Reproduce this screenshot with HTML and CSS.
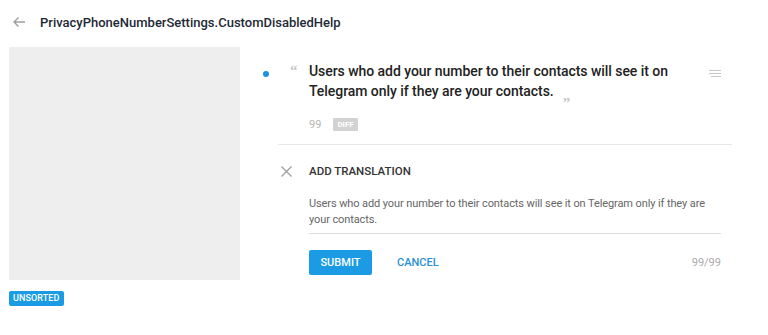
FILE: index.html
```html
<!DOCTYPE html>
<html>
<head>
  <meta charset="UTF-8" />
  <title>PrivacyPhoneNumberSettings.CustomDisabledHelp</title>
  <link rel="stylesheet" href="styles.css">
</head>
<body>
  <div class="header">
    <svg class="back" width="14" height="12" viewBox="0 0 14 12">
      <path d="M13 6H2M6.5 1.5L2 6l4.5 4.5" fill="none" stroke="#9e9e9e" stroke-width="1.4"/>
    </svg>
    <div class="title">PrivacyPhoneNumberSettings.CustomDisabledHelp</div>
  </div>

  <div class="main">
    <div class="side">
      <div class="screenshot"></div>
      <span class="tag">UNSORTED</span>
    </div>

    <div class="content">
      <div class="source">
        <span class="dot"></span>
        <span class="quote open">&ldquo;</span>
        <div class="source-body">
          <div class="source-text">Users who add your number to their contacts will see it on Telegram only if they are your contacts.<span class="quote close">&rdquo;</span></div>
          <div class="meta">
            <span class="count">99</span>
            <span class="diff">DIFF</span>
          </div>
        </div>
        <svg class="menu" width="12" height="8" viewBox="0 0 12 8">
          <path d="M0 0.5h12M0 3.5h12M2 6.5h10" stroke="#c8c8c8" stroke-width="1"/>
        </svg>
      </div>

      <div class="translation">
        <div class="tr-head">
          <svg class="close-icon" width="11" height="11" viewBox="0 0 11 11">
            <path d="M0.5 0.5l10 10M10.5 0.5l-10 10" stroke="#9e9e9e" stroke-width="1.3"/>
          </svg>
          <span class="tr-title">ADD TRANSLATION</span>
        </div>
        <div class="tr-input">Users who add your number to their contacts will see it on Telegram only if they are your contacts.</div>
        <div class="actions">
          <button class="btn btn-submit">SUBMIT</button>
          <button class="btn btn-cancel">CANCEL</button>
          <span class="limit">99/99</span>
        </div>
      </div>
    </div>
  </div>
</body>
</html>
```

FILE: styles.css
```css
body {
  margin: 0;
  font-family: Roboto, "Liberation Sans", Arial, sans-serif;
  background-color: #fff;
  color: #222;
}
.header {
  display: flex;
  align-items: center;
  height: 44px;
  padding-left: 12px;
}
.back {
  margin-right: 14px;
}
.title {
  font-size: 13px;
  font-weight: 500;
  color: #1e2935;
}
.main {
  display: flex;
  padding-top: 3px;
}
.side {
  width: 231px;
  padding-left: 9px;
}
.screenshot {
  height: 233px;
  background-color: #eeeeee;
}
.tag {
  display: inline-block;
  margin-top: 11px;
  padding: 0 4px;
  height: 15px;
  line-height: 15px;
  background-color: #1a9be4;
  color: #fff;
  border-radius: 2px;
  font-size: 9px;
  font-weight: 500;
  letter-spacing: 0.1px;
}
.content {
  width: 469px;
  padding-left: 23px;
}
.source {
  display: flex;
  align-items: flex-start;
  padding-top: 14px;
  height: 83px;
  border-bottom: 1px solid #e8e8e8;
  margin-left: 15px;
}
.dot {
  width: 6px;
  height: 6px;
  border-radius: 50%;
  background-color: #1a92e0;
  margin-top: 10px;
  margin-left: -15px;
}
.quote {
  color: #c4c4c4;
  font-family: Georgia, "Liberation Serif", serif;
  font-weight: 700;
  font-size: 15px;
  line-height: 1;
  letter-spacing: 0;
}
.quote.open {
  margin-left: 21px;
  margin-top: 2px;
  width: 19px;
}
.quote.close {
  display: inline-block;
  margin-left: 9px;
  height: 8px;
  vertical-align: -12px;
}
.source-body {
  width: 370px;
}
.source-text {
  width: 368px;
  font-size: 14px;
  letter-spacing: -0.05px;
  font-weight: 500;
  line-height: 20px;
  color: #222;
}
.meta {
  display: flex;
  align-items: center;
  margin-top: 14px;
}
.count {
  font-size: 11px;
  color: #b5b5b5;
  margin-right: 12px;
}
.diff {
  background-color: #d2d2d2;
  color: #fff;
  font-size: 8px;
  font-weight: 700;
  padding: 0 4px;
  height: 13px;
  line-height: 13px;
  border-radius: 1px;
}
.menu {
  margin-left: 30px;
  margin-top: 9px;
}
.translation {
  padding-top: 19px;
}
.tr-head {
  display: flex;
  align-items: center;
  margin-left: 18px;
}
.close-icon {
  margin-right: 17px;
}
.tr-title {
  font-size: 11.5px;
  font-weight: 500;
  color: #333;
}
.tr-input {
  margin: 18px 0 0 46px;
  width: 412px;
  font-size: 11px;
  letter-spacing: -0.1px;
  line-height: 16px;
  color: #666;
  padding-bottom: 5px;
  border-bottom: 1px solid #dcdcdc;
}
.actions {
  display: flex;
  align-items: center;
  margin: 16px 0 0 46px;
  width: 412px;
}
.btn {
  font-family: Roboto, "Liberation Sans", Arial, sans-serif;
  font-size: 11px;
  font-weight: 500;
  border: none;
  border-radius: 2px;
  cursor: pointer;
}
.btn-submit {
  background-color: #1a9be4;
  color: #fff;
  width: 63px;
  height: 25px;
}
.btn-cancel {
  background: none;
  color: #2a8fd8;
  margin-left: 19px;
}
.limit {
  margin-left: auto;
  font-size: 11px;
  color: #aaa;
}
```
